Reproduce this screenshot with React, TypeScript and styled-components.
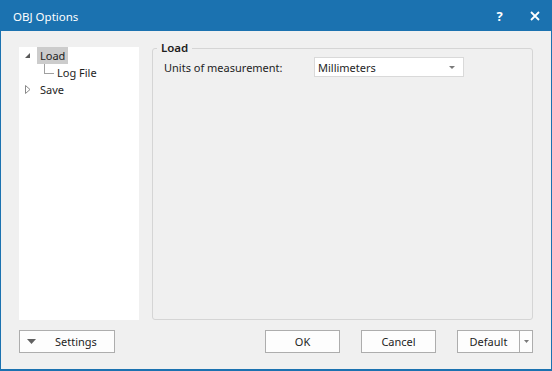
import React from "react";
import styled, { createGlobalStyle } from "styled-components";

const Global = createGlobalStyle`
  html, body { margin: 0; padding: 0; background: #f0f0f0; }
  body { font-family: "Noto Sans", "Liberation Sans", sans-serif; font-size: 11px; color: #1e1e1e; }
  * { box-sizing: border-box; }
`;

const Window = styled.div`
  width: 552px;
  height: 371px;
  border: 1px solid #1b72b0;
  border-top: none;
  border-bottom-width: 2px;
  background: #f0f0f0;
  display: flex;
  flex-direction: column;
`;

const TitleBar = styled.div`
  height: 31px;
  margin: 0 -1px;
  background: #1b72b0;
  color: #fff;
  display: flex;
  align-items: center;
  padding: 0 0 0 13px;
  flex: none;
`;

const Title = styled.div`
  flex: 1;
  font-size: 11.5px;
  padding-top: 2px;
`;

const TitleButton = styled.div`
  width: 35px;
  height: 31px;
  display: flex;
  align-items: center;
  justify-content: center;
  font-weight: bold;
  font-size: 13px;
`;

const Body = styled.div`
  flex: 1;
  display: flex;
  flex-direction: column;
  padding: 10px 18px 15px 18px;
`;

const Main = styled.div`
  display: flex;
  gap: 13px;
  align-items: flex-start;
`;

const Tree = styled.div`
  width: 120px;
  height: 273px;
  margin-top: 6px;
  background: #fff;
`;

const TreeRow = styled.div<{ $indent: number }>`
  height: 17px;
  display: flex;
  align-items: center;
  padding-left: ${(p) => p.$indent}px;
`;

const Expander = styled.div`
  width: 18px;
  height: 17px;
  display: flex;
  align-items: center;
  justify-content: center;
  flex: none;
`;

const Connector = styled.div`
  width: 10px;
  height: 10px;
  margin-left: 7px;
  margin-bottom: 7px;
  border-left: 1px solid #a0a0a0;
  border-bottom: 1px solid #a0a0a0;
  flex: none;
`;

const Label = styled.span<{ $selected?: boolean }>`
  padding: 0 3px;
  height: 17px;
  line-height: 17px;
  background: ${(p) => (p.$selected ? "#cccccc" : "transparent")};
`;

const Group = styled.fieldset`
  margin: 0;
  width: 381px;
  height: 279px;
  border: 1px solid #d5d5d5;
  border-radius: 3px;
  padding: 2px 12px 0 11px;
`;

const Legend = styled.legend`
  font-weight: 600;
  padding: 0 4px;
  margin-left: -7px;
  line-height: 14px;
  font-size: 11.5px;
`;

const FieldRow = styled.div`
  display: flex;
  align-items: center;
`;

const FieldLabel = styled.div`
  width: 150px;
`;

const Select = styled.div`
  width: 150px;
  height: 20px;
  background: #fff;
  border: 1px solid #d9d9d9;
  display: flex;
  align-items: center;
  padding: 0 0 0 3px;
  justify-content: space-between;
`;

const Caret = styled.svg`
  margin-right: 8px;
`;

const Footer = styled.div`
  display: flex;
  align-items: center;
  margin-top: 10px;
`;

const Button = styled.div<{ $width: number }>`
  width: ${(p) => p.$width}px;
  height: 23px;
  border: 1px solid #adadad;
  background: #fdfdfd;
  display: flex;
  align-items: center;
  justify-content: center;
  flex: none;
`;

const SettingsButton = styled(Button)`
  justify-content: flex-start;
  padding-left: 7px;
`;

const SettingsText = styled.span`
  margin-left: 19px;
`;

const Spacer = styled.div`
  flex: 1;
`;

const Gap = styled.div<{ $w: number }>`
  width: ${(p) => p.$w}px;
  flex: none;
`;

const SplitButton = styled.div`
  width: 76px;
  height: 23px;
  border: 1px solid #adadad;
  background: #fdfdfd;
  display: flex;
  flex: none;
`;

const SplitMain = styled.div`
  flex: 1;
  display: flex;
  align-items: center;
  justify-content: center;
  border-right: 1px solid #adadad;
`;

const SplitArrow = styled.div`
  width: 12px;
  display: flex;
  align-items: center;
  justify-content: center;
`;

export default function App() {
  return (
    <>
      <Global />
      <Window>
        <TitleBar>
          <Title>OBJ Options</Title>
          <TitleButton>?</TitleButton>
          <TitleButton>
            <svg width="10" height="10" viewBox="0 0 10 10">
              <path d="M1 1 L9 9 M9 1 L1 9" stroke="#fff" strokeWidth="1.8" />
            </svg>
          </TitleButton>
        </TitleBar>
        <Body>
          <Main>
            <Tree>
              <TreeRow $indent={0}>
                <Expander>
                  <svg width="6" height="6" viewBox="0 0 6 6">
                    <polygon points="5,0 5,5 0,5" fill="#595959" />
                  </svg>
                </Expander>
                <Label $selected>Load</Label>
              </TreeRow>
              <TreeRow $indent={18}>
                <Connector />
                <Label>Log File</Label>
              </TreeRow>
              <TreeRow $indent={0}>
                <Expander>
                  <svg width="6" height="9" viewBox="0 0 6 9">
                    <polygon points="0.5,0.5 5,4.5 0.5,8.5" fill="none" stroke="#8a8a8a" strokeWidth="1" />
                  </svg>
                </Expander>
                <Label>Save</Label>
              </TreeRow>
            </Tree>
            <Group>
              <Legend>Load</Legend>
              <FieldRow>
                <FieldLabel>Units of measurement:</FieldLabel>
                <Select>
                  <span>Millimeters</span>
                  <Caret width="6" height="3" viewBox="0 0 6 3">
                    <polygon points="0,0 6,0 3,3" fill="#7a7a7a" />
                  </Caret>
                </Select>
              </FieldRow>
            </Group>
          </Main>
          <Footer>
            <SettingsButton $width={96}>
              <svg width="9" height="5" viewBox="0 0 9 5">
                <polygon points="0,0 9,0 4.5,5" fill="#606060" />
              </svg>
              <SettingsText>Settings</SettingsText>
            </SettingsButton>
            <Spacer />
            <Button $width={75}>OK</Button>
            <Gap $w={21} />
            <Button $width={75}>Cancel</Button>
            <Gap $w={21} />
            <SplitButton>
              <SplitMain>Default</SplitMain>
              <SplitArrow>
                <svg width="5" height="3" viewBox="0 0 5 3">
                  <polygon points="0,0 5,0 2.5,3" fill="#7a7a7a" />
                </svg>
              </SplitArrow>
            </SplitButton>
          </Footer>
        </Body>
      </Window>
    </>
  );
}
